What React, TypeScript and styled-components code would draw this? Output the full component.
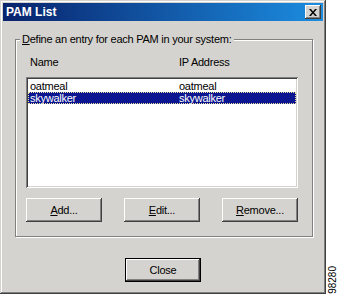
import React from 'react'
import styled, { createGlobalStyle } from 'styled-components'

const GlobalStyle = createGlobalStyle`
  html, body {
    margin : 0;
    padding : 0;
    background : #ffffff;
  }
  body {
    font-family : "Liberation Sans", Arial, sans-serif;
    font-size : 11px;
  }
`

const Page = styled.div`
  display : flex;
  align-items : flex-end;
  width : 339px;
  height : 296px;
`

const Window = styled.div`
  width : 326px;
  height : 294px;
  box-sizing : border-box;
  padding : 3px;
  display : flex;
  flex-direction : column;
  background : #d5d3cf;
  box-shadow :
    inset -1px -1px #404040,
    inset 1px 1px #d5d3cf,
    inset -2px -2px #808080,
    inset 2px 2px #ffffff;
  align-self : flex-start;
`

const TitleBar = styled.div`
  height : 18px;
  display : flex;
  align-items : center;
  justify-content : space-between;
  padding-left : 3px;
  background : linear-gradient(to right, #08226c, #1c8de0);
  color : #ffffff;
  font-weight : bold;
  font-size : 12px;
`

const TitleButton = styled.div`
  width : 16px;
  height : 14px;
  box-sizing : border-box;
  margin-right : 2px;
  display : flex;
  align-items : center;
  justify-content : center;
  background : #d5d3cf;
  box-shadow :
    inset -1px -1px #404040,
    inset 1px 1px #ffffff,
    inset -2px -2px #808080;
`

const Body = styled.div`
  flex : 1;
  display : flex;
  flex-direction : column;
  align-items : flex-start;
  padding : 12px 0 0 12px;
  letter-spacing : -0.25px;
`

const Group = styled.fieldset`
  width : 298px;
  box-sizing : border-box;
  margin : 0;
  padding : 10px 14px 14px 10px;
  border : 1px solid #808080;
  box-shadow : inset 1px 1px #ffffff, 1px 1px #ffffff;
`

const Legend = styled.legend`
  margin-left : -6px;
  padding : 0 2px;
  line-height : 13px;
  background : #d5d3cf;
  color : #000000;
`

const Columns = styled.div`
  display : grid;
  grid-template-columns : 149px 1fr;
  padding-left : 4px;
  line-height : 13px;
  color : #000000;
`

const HeaderRow = styled(Columns)`
  width : 272px;
  box-sizing : border-box;
`

const ListBox = styled.div`
  width : 272px;
  height : 111px;
  margin-top : 8px;
  box-sizing : border-box;
  padding : 3px 2px 2px 2px;
  background : #ffffff;
  box-shadow :
    inset 1px 1px #808080,
    inset -1px -1px #ffffff,
    inset 2px 2px #404040,
    inset -2px -2px #d5d3cf;
`

const Row = styled(Columns)<{ $selected?: boolean }>`
  height : 12px;
  line-height : 12px;
  padding-left : 2px;
  background : ${p => (p.$selected ? '#0b1690' : 'transparent')};
  color : ${p => (p.$selected ? '#ffffff' : '#000000')};
  outline : ${p => (p.$selected ? '1px dotted #f0e6a0' : 'none')};
  outline-offset : -1px;
`

const ButtonRow = styled.div`
  width : 272px;
  margin-top : 10px;
  display : flex;
  justify-content : space-between;
`

const Button = styled.div<{ $default?: boolean }>`
  width : 76px;
  height : 24px;
  box-sizing : border-box;
  display : flex;
  align-items : center;
  justify-content : center;
  background : #d5d3cf;
  color : #000000;
  box-shadow : ${p =>
    p.$default
      ? `inset 0 0 0 1px #000000,
    inset -2px -2px #404040,
    inset 2px 2px #ffffff,
    inset -3px -3px #808080`
      : `inset -1px -1px #404040,
    inset 1px 1px #ffffff,
    inset -2px -2px #808080,
    inset 2px 2px #d5d3cf`};
  u {
    text-decoration : underline;
    text-underline-offset : 1px;
  }
`

const Footer = styled.div`
  width : 100%;
  margin-top : 21px;
  padding-right : 12px;
  box-sizing : border-box;
  display : flex;
  justify-content : center;
`

const Figure = styled.div`
  writing-mode : vertical-rl;
  transform : rotate(180deg);
  font-size : 10px;
  line-height : 11px;
  color : #000000;
  margin : 0 0 2px 1px;
`

function CloseIcon() {
  return (
    <svg width="8" height="7" viewBox="0 0 8 7">
      <path d="M0 0h2l2 2.5L6 0h2L5 3.5 8 7H6L4 4.5 2 7H0l3-3.5z" fill="#000" />
    </svg>
  )
}

const rows = [
  { name: 'oatmeal', ip: 'oatmeal' },
  { name: 'skywalker', ip: 'skywalker', selected: true },
]

export default function App() {
  return (
    <Page>
      <GlobalStyle />
      <Window>
        <TitleBar>
          <span>PAM List</span>
          <TitleButton>
            <CloseIcon />
          </TitleButton>
        </TitleBar>
        <Body>
          <Group>
            <Legend>
              <u>D</u>efine an entry for each PAM in your system:
            </Legend>
            <HeaderRow>
              <span>Name</span>
              <span>IP Address</span>
            </HeaderRow>
            <ListBox>
              {rows.map(r => (
                <Row key={r.name} $selected={r.selected}>
                  <span>{r.name}</span>
                  <span>{r.ip}</span>
                </Row>
              ))}
            </ListBox>
            <ButtonRow>
              <Button><span><u>A</u>dd...</span></Button>
              <Button><span><u>E</u>dit...</span></Button>
              <Button><span><u>R</u>emove...</span></Button>
            </ButtonRow>
          </Group>
          <Footer>
            <Button $default>Close</Button>
          </Footer>
        </Body>
      </Window>
      <Figure>98280</Figure>
    </Page>
  )
}
